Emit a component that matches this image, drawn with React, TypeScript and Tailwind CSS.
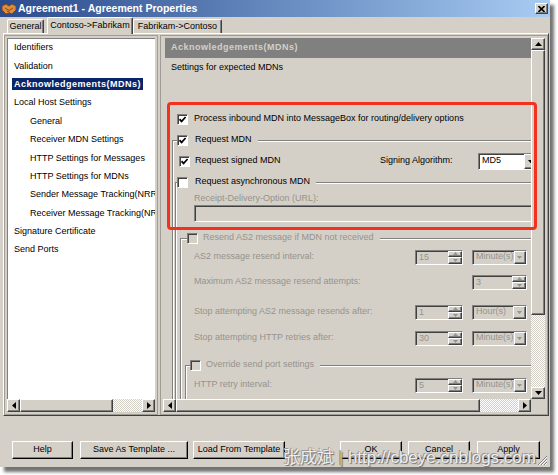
import React from 'react';

const FONT = "font-['Liberation_Sans',Arial,sans-serif]";
const RAISED =
  'border border-white border-r-[#404040] border-b-[#404040] shadow-[inset_-1px_-1px_0_#808080]';
const SUNKEN =
  'border border-[#808080] border-r-white border-b-white shadow-[inset_1px_1px_0_#404040]';
const DOTTED = 'bg-[repeating-conic-gradient(#ffffff_0_25%,#d4d0c8_0_50%)] bg-[length:2px_2px]';
const DIS = 'text-[#96938c]';

type Dir = 'up' | 'down' | 'left' | 'right';

function Tri({ dir, color = '#000', small }: { dir: Dir; color?: string; small?: boolean }) {
  const vertical = dir === 'up' || dir === 'down';
  const a = small ? 5 : 7;
  const b = small ? 3 : 4;
  const pts = {
    up: `0,${b} ${a / 2},0 ${a},${b}`,
    down: `0,0 ${a},0 ${a / 2},${b}`,
    left: `${b},0 ${b},${a} 0,${a / 2}`,
    right: `0,0 ${b},${a / 2} 0,${a}`,
  }[dir];
  const w = vertical ? a : b;
  const h = vertical ? b : a;
  return (
    <svg width={w} height={h} viewBox={`0 0 ${w} ${h}`}>
      <polygon points={pts} fill={color} />
    </svg>
  );
}

function ScrollBtn({ dir, cls }: { dir: Dir; cls: string }) {
  return (
    <div className={`flex shrink-0 items-center justify-center bg-[#d4d0c8] ${RAISED} ${cls}`}>
      <Tri dir={dir} />
    </div>
  );
}

function Box({ on, off }: { on?: boolean; off?: boolean }) {
  return (
    <span
      className={`flex h-[11px] w-[11px] shrink-0 items-center justify-center ${SUNKEN} ${
        off ? 'bg-[#d4d0c8]' : 'bg-white'
      }`}
    >
      {on && (
        <svg width="7" height="7" viewBox="0 0 7 7">
          <path d="M0.5 3.2 L2.6 5.4 L6.6 1" fill="none" stroke="#000" strokeWidth="1.7" />
        </svg>
      )}
    </span>
  );
}

function Spin({ value, cls }: { value: string; cls: string }) {
  return (
    <div className={`flex h-[15px] shrink-0 bg-[#d4d0c8] ${SUNKEN} ${cls}`}>
      <span className={`flex-1 pl-[3px] leading-[13px] ${DIS}`}>{value}</span>
      <div className="flex w-[14px] flex-col">
        <div className={`flex flex-1 items-center justify-center ${RAISED}`}>
          <Tri dir="up" small color="#96938c" />
        </div>
        <div className={`flex flex-1 items-center justify-center ${RAISED}`}>
          <Tri dir="down" small color="#96938c" />
        </div>
      </div>
    </div>
  );
}

function Combo({ value, cls, enabled }: { value: string; cls: string; enabled?: boolean }) {
  return (
    <div className={`flex shrink-0 ${SUNKEN} ${enabled ? 'bg-white' : 'bg-[#d4d0c8]'} ${cls}`}>
      <span className={`flex flex-1 items-center pl-[3px] ${enabled ? '' : DIS}`}>{value}</span>
      <div className={`flex w-[13px] items-center justify-center bg-[#d4d0c8] ${RAISED}`}>
        <Tri dir="down" small color={enabled ? '#000' : '#96938c'} />
      </div>
    </div>
  );
}

function Row({ label, cls, children }: { label: string; cls: string; children: React.ReactNode }) {
  return (
    <div className={`flex h-[16px] shrink-0 items-center pr-[4px] ${cls}`}>
      <span className={`flex-1 whitespace-nowrap ${DIS}`}>{label}</span>
      {children}
    </div>
  );
}

function Group({
  cls,
  legendCls,
  gap,
  on,
  dim,
  label,
  children,
}: {
  cls: string;
  legendCls: string;
  gap: string;
  on?: boolean;
  dim?: boolean;
  label: string;
  children: React.ReactNode;
}) {
  return (
    <fieldset className={`min-w-0 border-t border-l border-[#808080] shadow-[inset_1px_1px_0_#fff] ${cls}`}>
      <legend className={`flex h-[16px] items-center bg-[#d4d0c8] pr-[6px] ${legendCls}`}>
        <Box on={on} off={dim} />
        <span className={`${gap} whitespace-nowrap ${dim ? DIS : ''}`}>{label}</span>
      </legend>
      <div className="flex flex-col">{children}</div>
    </fieldset>
  );
}

function Tab({ children, cls }: { children: React.ReactNode; cls: string }) {
  return (
    <div
      className={`flex shrink-0 items-center justify-center rounded-t-[2px] border-t border-l border-r border-white border-r-[#404040] bg-[#d4d0c8] shadow-[inset_-1px_0_0_#808080] whitespace-nowrap ${cls}`}
    >
      {children}
    </div>
  );
}

function Btn({ children, cls }: { children: React.ReactNode; cls: string }) {
  return (
    <div
      className={`flex h-[18px] shrink-0 items-center justify-center border border-white border-r-black border-b-black shadow-[inset_-1px_-1px_0_#808080] ${cls}`}
    >
      {children}
    </div>
  );
}

const TREE: [string, number, boolean?][] = [
  ['Identifiers', 0],
  ['Validation', 0],
  ['Acknowledgements(MDNs)', 0, true],
  ['Local Host Settings', 0],
  ['General', 1],
  ['Receiver MDN Settings', 1],
  ['HTTP Settings for Messages', 1],
  ['HTTP Settings for MDNs', 1],
  ['Sender Message Tracking(NRR)', 1],
  ['Receiver Message Tracking(NRR)', 1],
  ['Signature Certificate', 0],
  ['Send Ports', 0],
];

export default function App() {
  return (
    <div className={`relative h-[475px] w-[558px] overflow-hidden bg-white text-[9px] text-black ${FONT}`}>
      <div className="relative flex h-[467px] w-[550px] flex-col bg-[#d4d0c8] shadow-[4px_5px_3px_rgba(0,0,0,0.55)]">
        {/* title bar */}
        <div className="flex h-[17px] shrink-0 items-center bg-linear-to-r from-[#2b4a8c] to-[#a8ccf2] pl-[2px] pr-[2px]">
          <svg width="14" height="13" viewBox="0 0 14 13">
            <path
              d="M0 4 L4 2 L7 4 L10 2 L14 4 L14 8 L10 12 L7 11 L4 12 L0 8 Z"
              fill="#dc8c3c"
              stroke="#7a3e10"
              strokeWidth="0.8"
            />
            <path d="M3 6 L7 8.5 L11 6 M5 9 L8 10.5" stroke="#7a3e10" fill="none" strokeWidth="0.8" />
          </svg>
          <span className="ml-[2px] text-[10.5px] font-bold text-white">Agreement1 - Agreement Properties</span>
          <div className={`ml-auto flex h-[11px] w-[13px] items-center justify-center bg-[#d4d0c8] ${RAISED}`}>
            <svg width="7" height="6" viewBox="0 0 7 6">
              <path d="M0.5 0 L6.5 6 M6.5 0 L0.5 6" stroke="#000" strokeWidth="1.6" />
            </svg>
          </div>
        </div>

        {/* tabs */}
        <div className="flex h-[16px] shrink-0 items-end pl-[7px]">
          <Tab cls="h-[14px] w-[37px]">General</Tab>
          <Tab cls="relative z-10 -mb-[1px] ml-[3px] h-[17px] w-[86px]">Contoso-&gt;Fabrikam</Tab>
          <Tab cls="h-[14px] w-[89px]">Fabrikam-&gt;Contoso</Tab>
        </div>

        {/* tab page */}
        <div className="ml-[3px] flex h-[383px] w-[546px] shrink-0 gap-[2px] border border-white border-r-[#404040] border-b-[#404040] pt-[1px]">
          {/* tree */}
          <div className="flex h-[380px] w-[154px] shrink-0 flex-col border border-[#a09d96] p-[2px]">
            <div className="flex min-h-0 flex-1 flex-col bg-white shadow-[inset_1px_1px_0_#808080]">
              <div className="min-h-0 flex-1 overflow-hidden">
                {TREE.map(([t, lvl, sel]) => (
                  <div
                    key={t}
                    className={`flex h-[18.4px] items-center whitespace-nowrap ${lvl ? 'pl-[21px]' : 'pl-[5px]'}`}
                  >
                    <span
                      className={`px-[2px] leading-[12px] ${
                        sel ? 'bg-[#0a246a] font-bold tracking-[0.5px] text-white' : ''
                      }`}
                    >
                      {t}
                    </span>
                  </div>
                ))}
              </div>
              <div className="flex h-[13px] shrink-0 bg-[#d4d0c8]">
                <ScrollBtn dir="left" cls="w-[13px]" />
                <div className={`w-[93px] shrink-0 bg-[#d4d0c8] ${RAISED}`} />
                <div className={`flex-1 ${DOTTED}`} />
                <ScrollBtn dir="right" cls="w-[13px]" />
              </div>
            </div>
          </div>

          {/* settings page */}
          <div className="flex h-[380px] w-[388px] shrink-0 border border-[#a09d96] p-[2px]">
            <div className="grid min-w-0 flex-1 grid-cols-[1fr_14px] grid-rows-[1fr_13px]">
              <div className="flex min-h-0 min-w-0 flex-col overflow-hidden pl-[2px]">
                <div className="flex h-[20px] shrink-0 items-center bg-[#808080] pl-[6px] font-bold tracking-[0.5px] text-[#d4d0c8]">
                  Acknowledgements(MDNs)
                </div>
                <div className="flex h-[20px] shrink-0 items-center pl-[6px]">Settings for expected MDNs</div>
                <div className="h-[32px] shrink-0" />

                <div className="flex h-[18px] shrink-0 items-center pl-[12px]">
                  <Box on />
                  <span className="ml-[6px] whitespace-nowrap">
                    Process inbound MDN into MessageBox for routing/delivery options
                  </span>
                </div>

                <Group cls="mt-[4px] ml-[7px]" legendCls="ml-[4px]" gap="ml-[7px]" on label="Request MDN">
                  <div className="mt-[4px] flex h-[18px] shrink-0 items-center pl-[6px]">
                    <Box on />
                    <span className="ml-[5px] flex-1 whitespace-nowrap">Request signed MDN</span>
                    <span className="w-[98px] shrink-0 whitespace-nowrap">Signing Algorithm:</span>
                    <Combo value="MD5" enabled cls="-mr-[7px] h-[17px] w-[60px]" />
                  </div>

                  <Group cls="mt-[4px] ml-[2px]" legendCls="ml-[1px]" gap="ml-[7px]" label="Request asynchronous MDN">
                    <div className={`mt-[2px] flex h-[13px] shrink-0 items-center pl-[18px] ${DIS}`}>
                      Receipt-Delivery-Option (URL):
                    </div>
                    <div className={`-mr-[10px] ml-[18px] h-[17px] shrink-0 bg-[#d4d0c8] ${SUNKEN}`} />

                    <Group
                      cls="mt-[8px] ml-[4px]"
                      legendCls="ml-[6px]"
                      gap="ml-[5px]"
                      dim
                      label="Resend AS2 message if MDN not received"
                    >
                      <Row label="AS2 message resend interval:" cls="mt-[3px] pl-[13px]">
                        <Spin value="15" cls="w-[48px]" />
                        <Combo value="Minute(s)" cls="ml-[9px] h-[15px] w-[55px]" />
                      </Row>
                      <Row label="Maximum AS2 message resend attempts:" cls="mt-[9px] pl-[13px]">
                        <Spin value="3" cls="w-[55px]" />
                      </Row>
                      <Row label="Stop attempting AS2 message resends after:" cls="mt-[14px] pl-[13px]">
                        <Spin value="1" cls="w-[48px]" />
                        <Combo value="Hour(s)" cls="ml-[9px] h-[15px] w-[55px]" />
                      </Row>
                      <Row label="Stop attempting HTTP retries after:" cls="mt-[10px] pl-[13px]">
                        <Spin value="30" cls="w-[48px]" />
                        <Combo value="Minute(s)" cls="ml-[9px] h-[15px] w-[55px]" />
                      </Row>

                      <Group
                        cls="mt-[11px] ml-[4px]"
                        legendCls="ml-[4px]"
                        gap="ml-[5px]"
                        dim
                        label="Override send port settings"
                      >
                        <Row label="HTTP retry interval:" cls="mt-[4px] pl-[8px]">
                          <Spin value="5" cls="w-[48px]" />
                          <Combo value="Minute(s)" cls="ml-[9px] h-[15px] w-[55px]" />
                        </Row>
                        <div className="h-[30px] shrink-0" />
                      </Group>
                    </Group>
                  </Group>
                </Group>
              </div>

              {/* vertical scrollbar */}
              <div className="flex min-h-0 flex-col">
                <ScrollBtn dir="up" cls="h-[12px]" />
                <div className={`h-[265px] shrink-0 bg-[#d4d0c8] ${RAISED}`} />
                <div className={`flex-1 ${DOTTED}`} />
                <ScrollBtn dir="down" cls="h-[12px]" />
              </div>

              {/* horizontal scrollbar */}
              <div className="flex min-w-0">
                <ScrollBtn dir="left" cls="w-[13px]" />
                <div className={`w-[304px] shrink-0 bg-[#d4d0c8] ${RAISED}`} />
                <div className={`flex-1 ${DOTTED}`} />
                <ScrollBtn dir="right" cls="w-[13px]" />
              </div>
              <div className="bg-[#d4d0c8]" />
            </div>
          </div>
        </div>

        {/* buttons */}
        <div className="mt-[25px] flex h-[18px] shrink-0">
          <Btn cls="ml-[12px] w-[61px]">Help</Btn>
          <Btn cls="ml-[7px] w-[108px]">Save As Template ...</Btn>
          <Btn cls="ml-[5px] w-[92px]">Load From Template</Btn>
          <Btn cls="ml-[55px] w-[62px]">OK</Btn>
          <Btn cls="ml-[6px] w-[62px]">Cancel</Btn>
          <Btn cls="ml-[7px] w-[63px]">Apply</Btn>
        </div>

        {/* size grip */}
        <svg className="absolute right-[2px] bottom-[1px]" width="11" height="11" viewBox="0 0 11 11">
          <path d="M10 1 L1 10 M10 4 L4 10 M10 7 L7 10" stroke="#808080" strokeWidth="1" />
          <path d="M10 2 L2 10 M10 5 L5 10 M10 8 L8 10" stroke="#fff" strokeWidth="1" />
        </svg>
      </div>

      {/* annotation */}
      <div className="absolute top-[102px] left-[167px] h-[128px] w-[370px] rounded-[4px] border-[3px] border-[#f2321e]" />

      {/* watermark */}
      <div className="absolute top-[445px] left-[283px] font-['Liberation_Sans','Noto_Sans_CJK_SC',sans-serif] text-[17px] whitespace-nowrap text-[#eeeeee] [text-shadow:1px_1px_1px_#6b6b6b,-1px_-1px_0_#9a9a9a]">
        张成斌 <span className="text-[#e0b060]">|</span> http://cbeye.cnblogs.com
      </div>
    </div>
  );
}
